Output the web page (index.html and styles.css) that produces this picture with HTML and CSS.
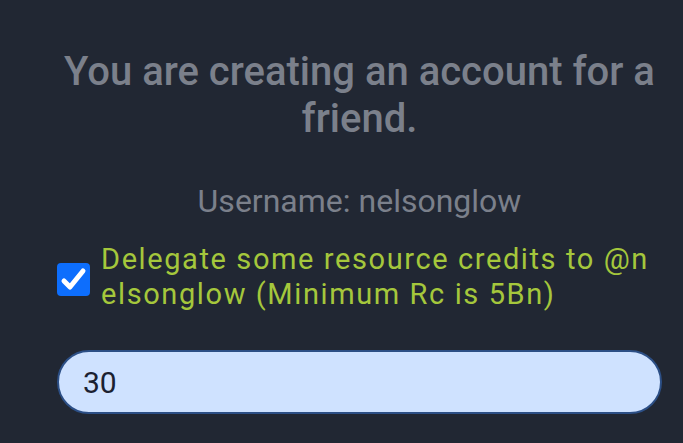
FILE: index.html
```html
<!DOCTYPE html>
<html>
<head>
<meta charset="utf-8">
<link rel="stylesheet" href="styles.css">
</head>
<body>
<main class="panel">
  <h1 class="title">You are creating an account for a friend.</h1>
  <p class="username">Username: nelsonglow</p>
  <label class="delegate">
    <span class="checkbox">
      <svg viewBox="0 0 33 33" width="33" height="33"><path d="M7 18 L13 24 L26 8" fill="none" stroke="#fff" stroke-width="5" stroke-linecap="round" stroke-linejoin="round"/></svg>
    </span>
    <span class="delegate-text">Delegate some resource credits to @nelsonglow (Minimum Rc is 5Bn)</span>
  </label>
  <input class="amount" type="text" value="30">
</main>
</body>
</html>
```
FILE: styles.css
```css
html, body {
  margin: 0;
  padding: 0;
  background: #212733;
  height: 100%;
}
body {
  font-family: Roboto, "Noto Sans", sans-serif;
}
.panel {
  padding: 48px 21px 0 57px;
  display: flex;
  flex-direction: column;
}
.title {
  margin: 0;
  font-size: 40px;
  line-height: 47px;
  font-weight: 500;
  color: #7b808b;
  text-align: center;
}
.username {
  margin: 40px 0 0;
  font-size: 32px;
  line-height: 38px;
  color: #7b808b;
  text-align: center;
}
.delegate {
  margin-top: 22px;
  padding-right: 6px;
  display: flex;
  align-items: flex-start;
  gap: 11px;
}
.checkbox {
  flex: none;
  width: 33px;
  height: 33px;
  margin-top: 21px;
  background: #0d6efd;
  border-radius: 4px;
  display: flex;
}
.delegate-text {
  font-size: 29px;
  line-height: 35px;
  letter-spacing: 1.6px;
  color: #a5c73c;
  word-break: break-all;
}
.amount {
  margin-top: 38px;
  box-sizing: border-box;
  width: 100%;
  height: 64px;
  border: 2px solid #2c4f86;
  border-radius: 32px;
  background: #cfe2ff;
  padding: 0 24px;
  font-family: Roboto, "Noto Sans", sans-serif;
  font-size: 30px;
  color: #1b2131;
  outline: none;
}
```
